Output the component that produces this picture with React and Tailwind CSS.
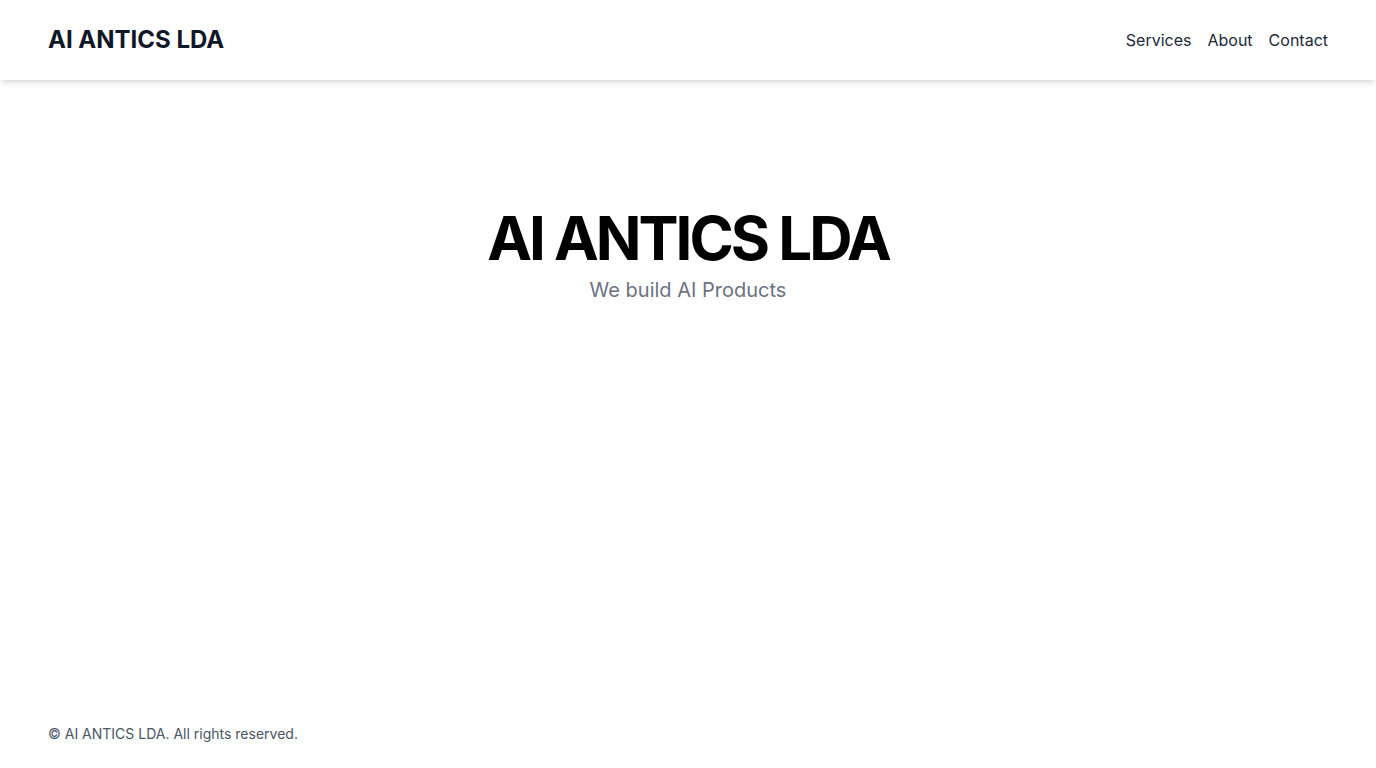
export default function App() {
  return (
    <div
      className="min-h-screen flex flex-col bg-white"
      style={{ fontFamily: "Inter, 'Noto Sans', sans-serif" }}
    >
      {/* Header */}
      <header className="h-20 px-12 flex items-center justify-between bg-white shadow-md">
        <h1 className="text-2xl font-bold text-gray-900">AI ANTICS LDA</h1>
        <nav className="flex items-center gap-4 text-base text-gray-800">
          <a href="#services">Services</a>
          <a href="#about">About</a>
          <a href="#contact">Contact</a>
        </nav>
      </header>

      {/* Hero */}
      <main className="flex-1 flex flex-col items-center pt-[128px]">
        <h2 className="text-6xl leading-none font-bold text-black tracking-tighter">
          AI ANTICS LDA
        </h2>
        <p className="mt-2 text-xl text-gray-500">We build AI Products</p>
      </main>

      {/* Footer */}
      <footer className="px-12 py-6 text-sm text-gray-600">
        © AI ANTICS LDA. All rights reserved.
      </footer>
    </div>
  );
}
